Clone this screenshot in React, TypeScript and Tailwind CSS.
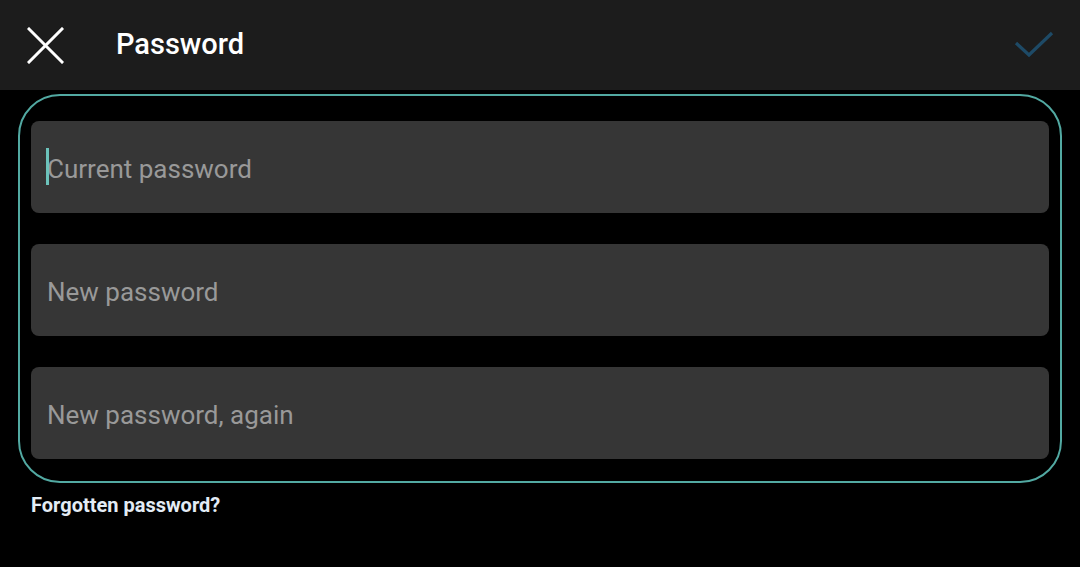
import { useState } from 'react'

// ── Header bar ────────────────────────────────────────────────────────────────
function Header() {
  return (
    <div className="h-[90px] bg-[#1c1c1c] flex items-center">
      <button className="ml-[27px] w-[37px] h-[37px] flex items-center justify-center">
        <svg width="37" height="37" viewBox="0 0 37 37" fill="none">
          <path d="M2 2 L35 35 M35 2 L2 35" stroke="#ffffff" strokeWidth="3" strokeLinecap="square" />
        </svg>
      </button>
      <h1 className="ml-[52px] text-[29px] font-medium text-white">Password</h1>
      <button className="ml-auto mr-[26px] w-[40px] h-[30px] flex items-center justify-center">
        <svg width="40" height="30" viewBox="0 0 40 30" fill="none">
          <path d="M2 13 L15 25 L38 3" stroke="#1e4a66" strokeWidth="3.2" />
        </svg>
      </button>
    </div>
  )
}

// ── Single password field ─────────────────────────────────────────────────────
function Field({ placeholder, focused }: { placeholder: string; focused?: boolean }) {
  const [value, setValue] = useState('')
  return (
    <div className="relative h-[92px] rounded-[8px] bg-[#363636] flex items-center">
      {focused && !value && (
        <span className="absolute left-[15px] top-[27px] w-[3px] h-[37px] bg-[#6cc3bb]" />
      )}
      <input
        type="password"
        value={value}
        onChange={(e) => setValue(e.target.value)}
        placeholder={placeholder}
        className="w-full h-full bg-transparent pl-[16px] pr-4 pt-[3px] text-[26px] text-white placeholder:text-[#999999] outline-none caret-transparent"
      />
    </div>
  )
}

export default function App() {
  return (
    <div
      className="w-[1080px] h-[567px] bg-black overflow-hidden"
      style={{ fontFamily: 'Roboto, "Noto Sans", sans-serif' }}
    >
      <Header />

      <div className="mt-[4px] mx-[18px] rounded-[42px] border-[2.5px] border-[#52a9a2] px-[11px] pt-[25px] pb-[22px] flex flex-col gap-[31px]">
        <Field placeholder="Current password" focused />
        <Field placeholder="New password" />
        <Field placeholder="New password, again" />
      </div>

      <a className="block ml-[31px] mt-[7px] text-[20px] font-bold text-[#e3ecf5] cursor-pointer">
        Forgotten password?
      </a>
    </div>
  )
}
